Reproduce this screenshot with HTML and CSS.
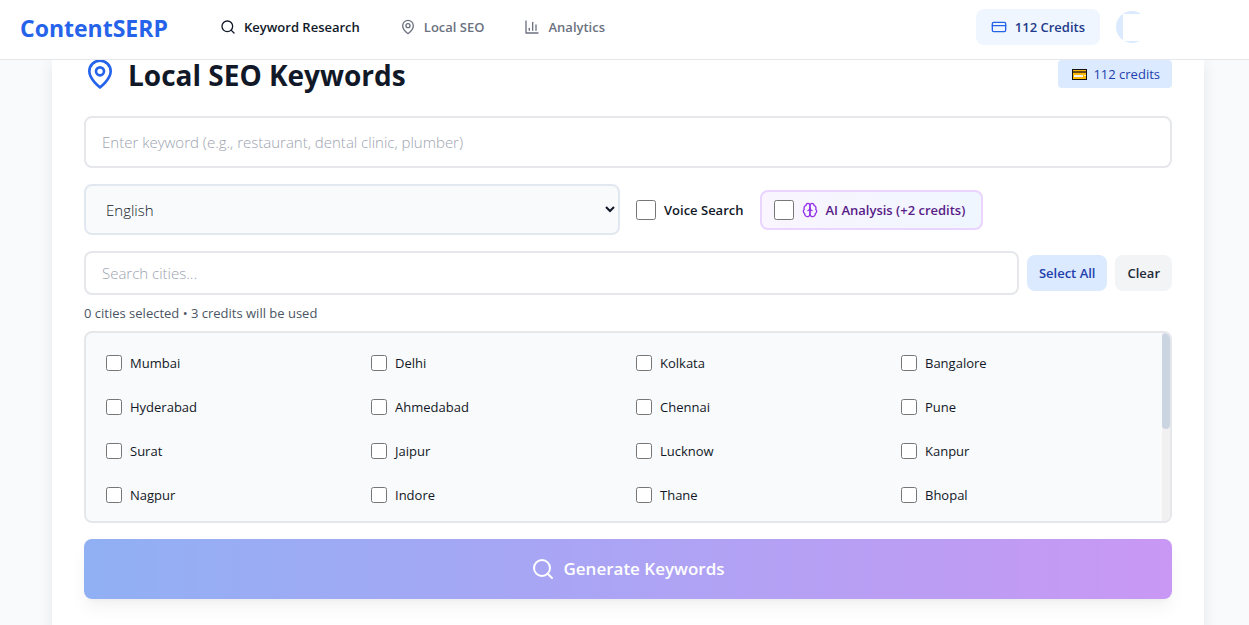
FILE: index.html
```html
<!DOCTYPE html>
<html lang="en">
<head>
	<meta charset="utf-8">
	<meta name="viewport" content="width=device-width, initial-scale=1">
	<title>ContentSERP - Local SEO Keywords</title>
	<link rel="stylesheet" href="styles.css">
</head>
<body>

<header class="topbar">
	<a class="logo" href="#">ContentSERP</a>
	<nav class="nav">
		<a class="nav-link active" href="#">
			<svg class="icon16" viewBox="0 0 24 24"><circle cx="11" cy="11" r="8"/><path d="m21 21-4.3-4.3"/></svg>
			Keyword Research
		</a>
		<a class="nav-link" href="#">
			<svg class="icon16" viewBox="0 0 24 24"><path d="M20 10c0 6-8 12-8 12s-8-6-8-12a8 8 0 0 1 16 0Z"/><circle cx="12" cy="10" r="3"/></svg>
			Local SEO
		</a>
		<a class="nav-link" href="#">
			<svg class="icon16" viewBox="0 0 24 24"><path d="M3 3v18h18"/><path d="M18 17V9"/><path d="M13 17V5"/><path d="M8 17v-3"/></svg>
			Analytics
		</a>
	</nav>
	<div class="account">
		<button class="credits-button" type="button">
			<svg class="icon16" viewBox="0 0 24 24"><rect x="2" y="5" width="20" height="14" rx="2"/><path d="M2 10h20"/></svg>
			112 Credits
		</button>
		<div class="avatar"><div class="avatar-cover"></div></div>
	</div>
</header>

<main class="page">
	<section class="card">
		<div class="card-head">
			<svg class="pin" viewBox="0 0 24 24"><path d="M20 10c0 6-8 12-8 12s-8-6-8-12a8 8 0 0 1 16 0Z"/><circle cx="12" cy="10" r="3"/></svg>
			<h1 class="title">Local SEO Keywords</h1>
			<div class="badge">
				<svg class="badge-card" viewBox="0 0 15 11"><path fill="#111" d="M0 0h15v11H0z"/><path fill="#ffb900" d="M1 1h13v9H1z"/><path fill="#6b4a1b" d="M1 2h13v2H1z"/><path fill="#f1f5f9" d="M2 6h9v2H2z"/><path fill="#fff3c4" d="M12 6h2v1h-2z"/></svg>
				112 credits
			</div>
		</div>

		<form class="form">
			<input class="field keyword" type="text" aria-label="Keyword" placeholder="Enter keyword (e.g., restaurant, dental clinic, plumber)">

			<div class="options">
				<select class="language" aria-label="Language">
					<option>English</option>
				</select>
				<div class="toggles">
					<label class="toggle"><input class="check20" type="checkbox">Voice Search</label>
					<label class="toggle ai">
						<input class="check20" type="checkbox">
						<svg class="icon16" viewBox="0 0 24 24"><path d="M12 5a3 3 0 1 0-5.997.125 4 4 0 0 0-2.526 5.77 4 4 0 0 0 .556 6.588A4 4 0 1 0 12 18Z"/><path d="M12 5a3 3 0 1 1 5.997.125 4 4 0 0 1 2.526 5.77 4 4 0 0 1-.556 6.588A4 4 0 1 1 12 18Z"/><path d="M15 13a4.5 4.5 0 0 1-3-4 4.5 4.5 0 0 1-3 4"/></svg>
						AI Analysis (+2 credits)
					</label>
				</div>
			</div>

			<div class="cities-block">
				<div class="city-search">
					<input class="field" type="text" aria-label="Search cities" placeholder="Search cities...">
					<button class="small-button select-all" type="button">Select All</button>
					<button class="small-button" type="button">Clear</button>
				</div>
				<p class="summary">0 cities selected • 3 credits will be used</p>
				<div class="cities">
					<div class="city-grid">
						<label class="city"><input type="checkbox">Mumbai</label>
						<label class="city"><input type="checkbox">Delhi</label>
						<label class="city"><input type="checkbox">Kolkata</label>
						<label class="city"><input type="checkbox">Bangalore</label>
						<label class="city"><input type="checkbox">Hyderabad</label>
						<label class="city"><input type="checkbox">Ahmedabad</label>
						<label class="city"><input type="checkbox">Chennai</label>
						<label class="city"><input type="checkbox">Pune</label>
						<label class="city"><input type="checkbox">Surat</label>
						<label class="city"><input type="checkbox">Jaipur</label>
						<label class="city"><input type="checkbox">Lucknow</label>
						<label class="city"><input type="checkbox">Kanpur</label>
						<label class="city"><input type="checkbox">Nagpur</label>
						<label class="city"><input type="checkbox">Indore</label>
						<label class="city"><input type="checkbox">Thane</label>
						<label class="city"><input type="checkbox">Bhopal</label>
					</div>
					<div class="scroll-track"><div class="scroll-thumb"></div></div>
				</div>
			</div>

			<button class="generate" type="submit" disabled>
				<svg class="icon24" viewBox="0 0 24 24"><circle cx="11" cy="11" r="8"/><path d="m21 21-4.3-4.3"/></svg>
				Generate Keywords
			</button>
		</form>
	</section>
</main>

</body>
</html>
```

FILE: styles.css
```css
* {
	box-sizing: border-box;
}

body {
	margin: 0;
	background: #f9fafb;
	color: #111827;
	font-family: "Open Sans", "Noto Sans", sans-serif;
	font-size: 13px;
	line-height: 20px;
}

button, input, select {
	font: inherit;
	color: inherit;
}

svg {
	flex: none;
	fill: none;
	stroke: currentColor;
	stroke-width: 2;
	stroke-linecap: round;
	stroke-linejoin: round;
}

.icon16 {
	width: 16px;
	height: 16px;
}

.icon24 {
	width: 24px;
	height: 24px;
}

/* top bar */
.topbar {
	position: sticky;
	top: 0;
	z-index: 10;
	display: flex;
	align-items: center;
	height: 60px;
	padding: 0 101px 5px 20px;
	background: #fff;
	border-bottom: 1px solid #e5e7eb;
}

.logo {
	width: 200px;
	padding-top: 2px;
	color: #2563eb;
	font-size: 23px;
	font-weight: 700;
	line-height: 32px;
	text-decoration: none;
}

.nav {
	display: flex;
	gap: 40px;
}

.nav-link {
	display: flex;
	align-items: center;
	gap: 8px;
	color: #6b7280;
	font-weight: 600;
	text-decoration: none;
}

.nav-link.active {
	color: #111827;
}

.account {
	display: flex;
	align-items: center;
	gap: 16px;
	margin-left: auto;
}

.credits-button {
	display: flex;
	align-items: center;
	gap: 8px;
	height: 36px;
	padding: 0 15px;
	border: 0;
	border-radius: 8px;
	background: #eff6ff;
	color: #1e3a8a;
	font-weight: 600;
}

.credits-button svg {
	color: #2563eb;
}

.avatar {
	width: 32px;
	height: 32px;
	padding: 3px 0 2px 7px;
	border-radius: 50%;
	background: linear-gradient(90deg, #dbeafe 24px, #fff 24px);
}

.avatar-cover {
	height: 27px;
	background: #fff;
}

/* card */
.page {
	margin-top: -2px;
	padding: 0 45px 0 52px;
}

.card {
	padding: 0 32px 32px;
	background: #fff;
	box-shadow: 0 4px 15px rgba(0,0,0,0.08);
}

.card-head {
	display: flex;
	align-items: center;
	gap: 12px;
	margin-bottom: 26px;
}

.pin {
	width: 32px;
	height: 32px;
	color: #2563eb;
}

.title {
	margin: 0;
	padding-top: 2px;
	font-size: 28px;
	font-weight: 700;
	line-height: 30px;
}

.badge {
	display: flex;
	align-items: center;
	gap: 6px;
	margin-left: auto;
	padding: 4px 12px 4px 14px;
	border-radius: 4px;
	background: #dbeafe;
	color: #1e40af;
}

.badge-card {
	width: 15px;
	height: 11px;
	stroke: none;
}

.form {
	display: flex;
	flex-direction: column;
	gap: 16px;
}

.field {
	flex: 1;
	min-width: 0;
	padding: 8px 16px;
	border: 2px solid #e5e7eb;
	border-radius: 8px;
	background: #fff;
	font-size: 15px;
	font-weight: 300;
	line-height: 24px;
}

.field::placeholder {
	color: #9ca3af;
}

.keyword {
	padding: 12px 16px;
}

.options {
	display: grid;
	grid-template-columns: 1fr 1fr;
	gap: 16px;
	align-items: center;
}

.language {
	height: 51px;
	padding: 0 16px;
	border: 2px solid #e2e8f0;
	border-radius: 8px;
	background: #f8fafc;
	font-size: 15px;
	font-weight: 300;
}

.toggles {
	display: flex;
	align-items: center;
	gap: 16px;
}

.toggle {
	display: flex;
	align-items: center;
	gap: 8px;
	font-weight: 600;
}

.ai {
	height: 40px;
	padding: 0 16px 0 12px;
	border: 2px solid #e9d5ff;
	border-radius: 8px;
	background: linear-gradient(90deg, #faf5ff, #eff6ff);
	color: #581c87;
}

.ai svg {
	color: #9333ea;
}

input[type="checkbox"] {
	flex: none;
	width: 16px;
	height: 16px;
	margin: 0;
}

input.check20[type="checkbox"] {
	width: 20px;
	height: 20px;
}

/* cities */
.city-search {
	display: flex;
	align-items: center;
	gap: 8px;
}

.small-button {
	height: 36px;
	padding: 0 12px;
	border: 0;
	border-radius: 8px;
	background: #f3f4f6;
	color: #1f2937;
	font-weight: 600;
}

.select-all {
	background: #dbeafe;
	color: #1e40af;
}

.summary {
	margin: 8px 0;
	color: #4b5563;
}

.cities {
	display: flex;
	overflow: hidden;
	border: 2px solid #e5e7eb;
	border-radius: 8px;
	background: #f9fafb;
}

.city-grid {
	flex: 1;
	display: grid;
	grid-template-columns: repeat(4, 1fr);
	gap: 8px;
	padding: 12px 12px 8px;
}

.city {
	display: flex;
	align-items: center;
	gap: 8px;
	padding: 8px;
}

.scroll-track {
	width: 8px;
	background: #f1f1f1;
}

.scroll-thumb {
	height: 51%;
	border-radius: 4px;
	background: #cbd5e1;
}

.generate {
	display: flex;
	align-items: center;
	justify-content: center;
	gap: 8px;
	height: 60px;
	border: 0;
	border-radius: 8px;
	background: linear-gradient(90deg, #2563eb, #9333ea);
	box-shadow: 0 10px 15px -3px rgba(0,0,0,0.1), 0 4px 6px -4px rgba(0,0,0,0.1);
	color: #fff;
	font-size: 17px;
	font-weight: 600;
	opacity: 0.5;
}
```
